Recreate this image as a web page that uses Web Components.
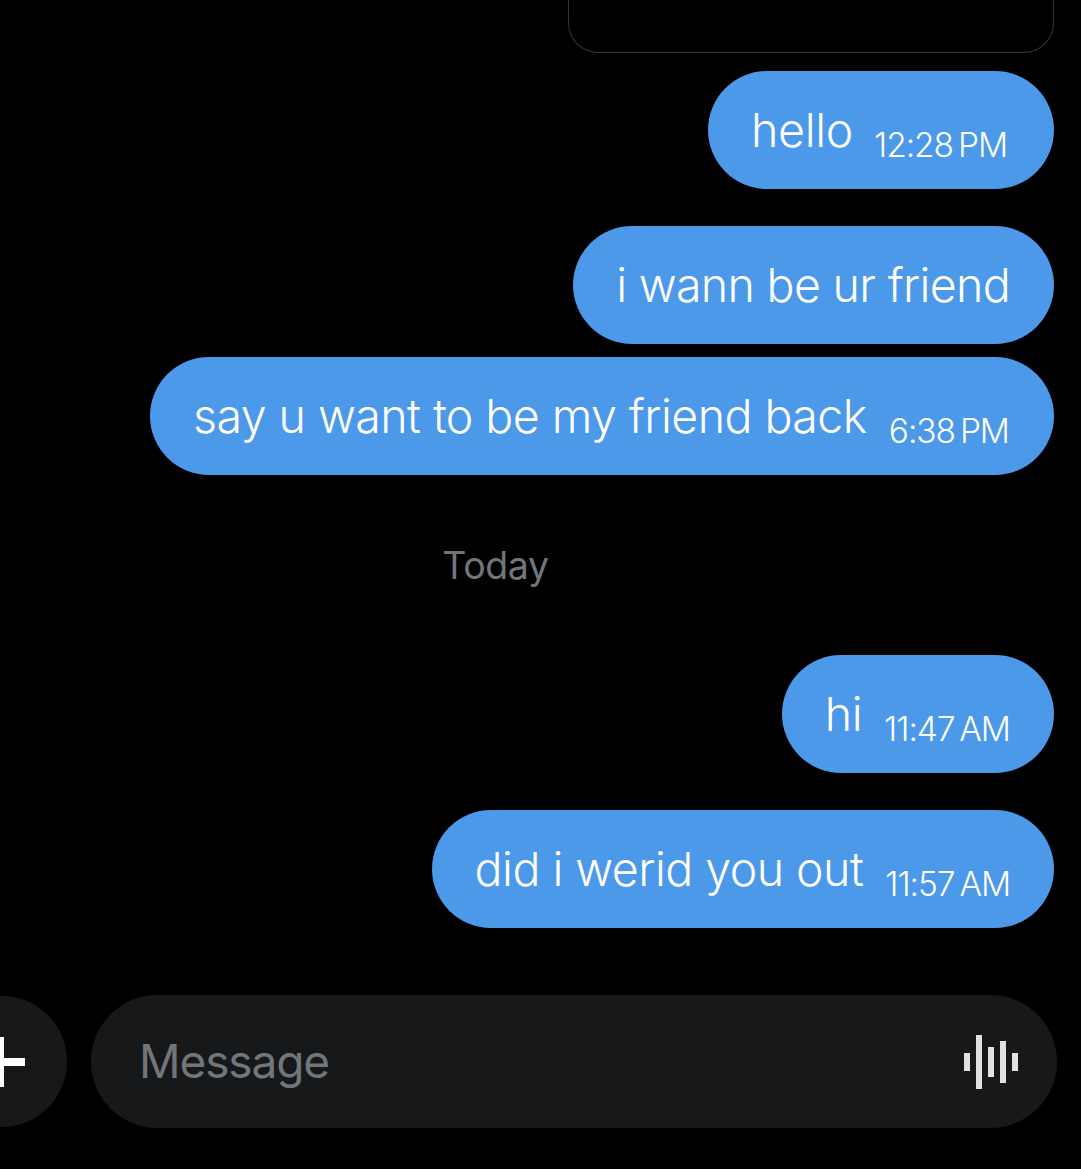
<!DOCTYPE html>
<html>
<head>
<meta charset="utf-8">
<style>
html, body { margin: 0; height: 1169px; background: #000; overflow: hidden; }
body { font-family: Inter, "Liberation Sans", sans-serif; }
</style>
</head>
<body>
<chat-view>
  <attachment-card></attachment-card>
  <chat-bubble time="12:28 PM" style="margin-top:18px;padding-right:47px;--gap:21px;--ls:-0.3px">hello</chat-bubble>
  <chat-bubble style="margin-top:37px;--ls:-0.68px">i wann be ur friend</chat-bubble>
  <chat-bubble time="6:38 PM" style="margin-top:13px;padding-right:45px;--ls:-0.55px">say u want to be my friend back</chat-bubble>
  <day-label>Today</day-label>
  <chat-bubble time="11:47 AM" style="--ls:-0.4px">hi</chat-bubble>
  <chat-bubble time="11:57 AM" style="margin-top:37px;--ls:-0.53px">did i werid you out</chat-bubble>
  <message-bar></message-bar>
</chat-view>
<script>
class ChatView extends HTMLElement {
  constructor () {
    super()
    this.attachShadow({ mode: 'open' })
    this.shadowRoot.innerHTML = `
<style>
:host { display: flex; flex-direction: column; align-items: flex-end; padding-right: 27px; height: 1169px; box-sizing: border-box; }
</style>
<slot></slot>`
  }
}

class AttachmentCard extends HTMLElement {
  constructor () {
    super()
    this.attachShadow({ mode: 'open' })
    this.shadowRoot.innerHTML = `
<style>
:host { display: block; width: 486px; height: 53px; box-sizing: border-box; border: 1px solid #333436; border-top: 0; border-radius: 0 0 30px 30px; }
</style>`
  }
}

class ChatBubble extends HTMLElement {
  constructor () {
    super()
    this.attachShadow({ mode: 'open' })
    const time = this.getAttribute('time')
    this.shadowRoot.innerHTML = `
<style>
:host { display: flex; align-items: baseline; gap: var(--gap, 22px); height: 118px; box-sizing: border-box; padding: 0 44px 0 43px; border-radius: 59px; background: #4c98e9; color: #fff; line-height: 118px; font-size: 46.5px; font-weight: 350; letter-spacing: var(--ls, -0.5px); white-space: nowrap; }
.time { font-size: 33.5px; letter-spacing: -1.05px; word-spacing: -3.5px; position: relative; top: 10px; }
</style>
<span><slot></slot></span>${time ? `<span class="time">${time}</span>` : ''}`
  }
}

class DayLabel extends HTMLElement {
  constructor () {
    super()
    this.attachShadow({ mode: 'open' })
    this.shadowRoot.innerHTML = `
<style>
:host { display: block; align-self: stretch; box-sizing: border-box; margin: 63px -27px 61px 0; padding-right: 90px; height: 56px; line-height: 56px; text-align: center; color: #71767b; font-size: 37.5px; letter-spacing: -0.4px; }
</style>
<slot></slot>`
  }
}

class MessageBar extends HTMLElement {
  constructor () {
    super()
    this.attachShadow({ mode: 'open' })
    this.shadowRoot.innerHTML = `
<style>
:host { display: flex; align-items: center; align-self: stretch; gap: 24px; margin: 67px -3px 0 -63px; }
.plus { flex: none; width: 130px; height: 131px; box-sizing: border-box; padding-right: 4px; border-radius: 50%; background: #16181a; display: flex; align-items: center; justify-content: center; }
.field { flex: 1; height: 133px; border-radius: 66.5px; background: #16181a; display: flex; align-items: center; justify-content: space-between; padding: 0 38px 0 48px; color: #71767b; font-size: 46px; letter-spacing: -1.1px; }
.field span { padding-bottom: 2px; }
.field svg { margin-top: 1px; }
svg { display: block; }
</style>
<div class="plus">
  <svg width="50" height="50" viewBox="0 0 50 50"><path d="M21 0h8v21h21v8H29v21h-8V29H0v-8h21z" fill="#fff"/></svg>
</div>
<div class="field">
  <span>Message</span>
  <svg width="56" height="56" viewBox="0 0 56 56" fill="#e1e1e1">
    <rect x="1" y="19" width="6" height="18"/>
    <rect x="13" y="1" width="6" height="54"/>
    <rect x="25" y="13" width="6" height="30"/>
    <rect x="37" y="7" width="6" height="42"/>
    <rect x="49" y="19" width="6" height="18"/>
  </svg>
</div>`
  }
}

window.customElements.define('chat-view', ChatView)
window.customElements.define('attachment-card', AttachmentCard)
window.customElements.define('chat-bubble', ChatBubble)
window.customElements.define('day-label', DayLabel)
window.customElements.define('message-bar', MessageBar)
</script>
</body>
</html>
